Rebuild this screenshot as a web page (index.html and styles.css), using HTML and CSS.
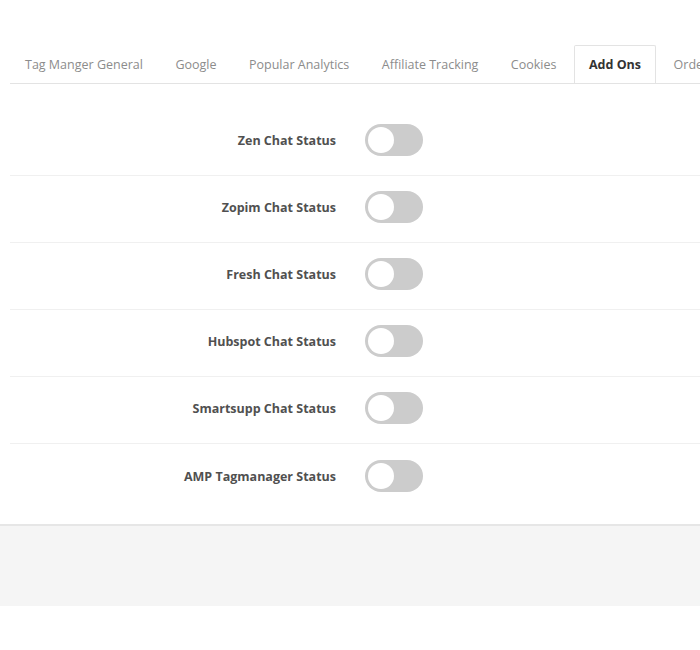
FILE: index.html
```
<!DOCTYPE html>
<html lang="en">
<head>
    <meta charset="UTF-8">
    <meta name="viewport" content="width=device-width, initial-scale=1.0">
    <title>Add Ons</title>
    <link rel="stylesheet" href="styles.css">
</head>
<body>
    <div class="settings">
        <ul class="tabs">
            <li class="tab">Tag Manger General</li>
            <li class="tab">Google</li>
            <li class="tab">Popular Analytics</li>
            <li class="tab">Affiliate Tracking</li>
            <li class="tab">Cookies</li>
            <li class="tab active">Add Ons</li>
            <li class="tab">Order Tracking</li>
        </ul>
        <div class="panel">
            <div class="row">
                <label class="row-label" for="zen">Zen Chat Status</label>
                <label class="switch"><input type="checkbox" id="zen"><span class="slider"></span></label>
            </div>
            <div class="row">
                <label class="row-label" for="zopim">Zopim Chat Status</label>
                <label class="switch"><input type="checkbox" id="zopim"><span class="slider"></span></label>
            </div>
            <div class="row">
                <label class="row-label" for="fresh">Fresh Chat Status</label>
                <label class="switch"><input type="checkbox" id="fresh"><span class="slider"></span></label>
            </div>
            <div class="row">
                <label class="row-label" for="hubspot">Hubspot Chat Status</label>
                <label class="switch"><input type="checkbox" id="hubspot"><span class="slider"></span></label>
            </div>
            <div class="row">
                <label class="row-label" for="smartsupp">Smartsupp Chat Status</label>
                <label class="switch"><input type="checkbox" id="smartsupp"><span class="slider"></span></label>
            </div>
            <div class="row">
                <label class="row-label" for="amp">AMP Tagmanager Status</label>
                <label class="switch"><input type="checkbox" id="amp"><span class="slider"></span></label>
            </div>
        </div>
        <div class="footer"></div>
    </div>
</body>
</html>
```
FILE: styles.css
```
body {
    font-family: "Open Sans", Arial, sans-serif;
    margin: 0;
    background-color: #fff;
    overflow: hidden;
}
.settings {
    padding-top: 45px;
}
.tabs {
    display: flex;
    list-style: none;
    margin: 0 0 0 10px;
    padding: 0;
    border-bottom: 1px solid #e3e3e3;
    white-space: nowrap;
    overflow: hidden;
}
.tab {
    font-size: 12.5px;
    line-height: 18px;
    padding: 10px 14px 9px;
    margin-right: 2.5px;
    margin-bottom: -1px;
    border: 1px solid transparent;
    border-radius: 2px 2px 0 0;
    color: #8c8c8c;
    cursor: pointer;
}
.tab.active {
    color: #333;
    font-weight: 700;
    background-color: #fff;
    border-color: #e3e3e3 #e3e3e3 #fff;
}
.panel {
    padding: 25px 0 13px;
    border-bottom: 2px solid #e6e6e6;
}
.row {
    display: grid;
    grid-template-columns: 341px auto;
    align-items: center;
    margin-left: 10px;
    padding: 15px 0 19px;
    border-bottom: 1px solid #f0f0f0;
}
.panel .row:last-child {
    padding-top: 16px;
    border-bottom: none;
}
.row-label {
    text-align: right;
    padding-right: 15px;
    font-size: 12.5px;
    font-weight: 700;
    color: #505050;
}
.switch {
    position: relative;
    display: inline-block;
    width: 58px;
    height: 32px;
    margin-left: 14px;
}
.switch input {
    opacity: 0;
    width: 0;
    height: 0;
}
.slider {
    position: absolute;
    inset: 0;
    background-color: #ccc;
    border-radius: 16px;
    cursor: pointer;
    transition: background-color 0.3s ease;
}
.slider:before {
    content: "";
    position: absolute;
    left: 3px;
    top: 3px;
    width: 26px;
    height: 26px;
    border-radius: 50%;
    background-color: #fff;
    transition: transform 0.3s ease;
}
.switch input:checked + .slider {
    background-color: #4CAF50;
}
.switch input:checked + .slider:before {
    transform: translateX(26px);
}
.footer {
    height: 80px;
    background-color: #f5f5f5;
}
```
